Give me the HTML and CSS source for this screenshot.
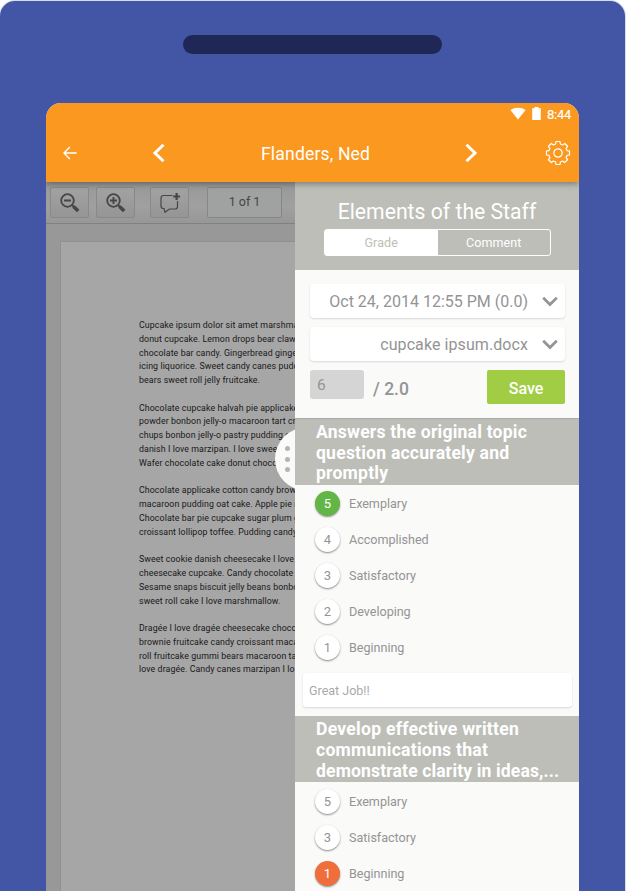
FILE: index.html
```html
<!DOCTYPE html>
<html lang="en">
<head>
<meta charset="utf-8">
<title>Grader</title>
<link rel="stylesheet" href="styles.css">
</head>
<body>
<div class="tablet">
  <div class="speaker"></div>
  <div class="screen">
    <header class="appbar">
      <div class="status">
        <svg class="wifi" width="16" height="13" viewBox="0 0 16 13"><path d="M.4 3Q3.500.8 8 .8T15.600 3L8 12.400z" fill="#fff"/></svg>
        <svg class="battery" width="9" height="13" viewBox="0 0 9 13"><path d="M.2 1.300H2.500V0H6.500V1.300H8.800V13H.2z" fill="#fff"/></svg>
        <span class="clock">8:44</span>
      </div>
      <nav class="nav">
        <svg class="back" width="16" height="14" viewBox="0 0 16 14"><path d="M7.800 1 2 7l5.800 6M2 7h12.600" fill="none" stroke="#fff" stroke-width="1.400"/></svg>
        <svg class="prev" width="14" height="20" viewBox="0 0 14 20"><path d="M11.500 1.700 3 10l8.500 8.300" fill="none" stroke="#fff" stroke-width="3"/></svg>
        <h1 class="student">Flanders, Ned</h1>
        <svg class="next" width="14" height="20" viewBox="0 0 14 20"><path d="M2.500 1.700 11 10l-8.500 8.300" fill="none" stroke="#fff" stroke-width="3"/></svg>
        <svg class="gear" width="26" height="26" viewBox="-13 -13 26 26" fill="none" stroke="#fff" stroke-width="1.200" stroke-linejoin="round"><circle r="4.200"/><path d="M-2-11.500H2L2.400-9 4.660-8.060 6.720-9.540 9.540-6.720 8.060-4.660 9-2.400 11.500-2V2L9 2.400 8.060 4.660 9.540 6.720 6.720 9.540 4.660 8.060 2.400 9 2 11.500H-2L-2.400 9-4.660 8.060-6.720 9.540-9.540 6.720-8.060 4.660-9 2.400-11.500 2V-2L-9-2.400-8.060-4.660-9.540-6.720-6.720-9.540-4.660-8.060-2.400-9z"/></svg>
      </nav>
    </header>
    <div class="content">
      <section class="viewer">
        <div class="toolbar">
          <div class="tool zoom-out"><svg width="22" height="22" viewBox="0 0 22 22" fill="none" stroke="#464646"><circle cx="8.500" cy="8.500" r="6.300" stroke-width="1.800"/><path d="M5 8.500h7" stroke-width="1.900"/><path d="M13 13l2 2" stroke-width="2"/><path d="m14.500 14.500 4.700 4.500" stroke-width="3.600"/></svg></div>
          <div class="tool zoom-in"><svg width="22" height="22" viewBox="0 0 22 22" fill="none" stroke="#464646"><circle cx="8.500" cy="8.500" r="6.300" stroke-width="1.800"/><path d="M5 8.500h7M8.500 5v7" stroke-width="1.900"/><path d="M13 13l2 2" stroke-width="2"/><path d="m14.500 14.500 4.700 4.500" stroke-width="3.600"/></svg></div>
          <div class="tool note"><svg width="22" height="22" viewBox="0 0 22 22" fill="none" stroke="#464646"><path d="M13.500 3.500H4.500Q2 3.500 2 6v8Q2 16.500 4.500 16.500H5l1 3.700 4.500-3.200h5.500q2.500 0 2.500-2.500V9" stroke-width="1.200"/><path d="M14.200 4.500H21M17.600 1v7" stroke-width="2.200"/></svg></div>
          <div class="pages">1 of 1</div>
        </div>
        <div class="desk">
          <article class="paper">
<p>Cupcake ipsum dolor sit amet marshma
donut cupcake. Lemon drops bear claw
chocolate bar candy. Gingerbread ginge
icing liquorice. Sweet candy canes pudd
bears sweet roll jelly fruitcake.</p>
<p>Chocolate cupcake halvah pie applicake
powder bonbon jelly-o macaroon tart cr
chups bonbon jelly-o pastry pudding g
danish I love marzipan. I love sweet
Wafer chocolate cake donut choco</p>
<p>Chocolate applicake cotton candy brow
macaroon pudding oat cake. Apple pie m
Chocolate bar pie cupcake sugar plum g
croissant lollipop toffee. Pudding candy</p>
<p>Sweet cookie danish cheesecake I love
cheesecake cupcake. Candy chocolate
Sesame snaps biscuit jelly beans bonbo
sweet roll cake I love marshmallow.</p>
<p>Dragée I love dragée cheesecake choco
brownie fruitcake candy croissant maca
roll fruitcake gummi bears macaroon ta
love dragée. Candy canes marzipan I lo</p>
          </article>
        </div>
      </section>
      <aside class="drawer">
        <div class="handle"><i></i><i></i><i></i></div>
        <div class="head">
          <h2>Elements of the Staff</h2>
          <div class="tabs"><span class="tab active">Grade</span><span class="tab">Comment</span></div>
        </div>
        <div class="form">
          <div class="select"><span class="date">Oct 24, 2014 12:55 PM (0.0)</span><svg width="16" height="11" viewBox="0 0 16 11"><path d="m1.200 1.800 6.800 6.700 6.800-6.700" fill="none" stroke="#949494" stroke-width="2.700"/></svg></div>
          <div class="select"><span class="file">cupcake ipsum.docx</span><svg width="16" height="11" viewBox="0 0 16 11"><path d="m1.200 1.800 6.800 6.700 6.800-6.700" fill="none" stroke="#949494" stroke-width="2.700"/></svg></div>
          <div class="score"><span class="points">6</span><span class="total">/ 2.0</span><span class="save">Save</span></div>
        </div>
        <h3>Answers the original topic<br>question accurately and<br>promptly</h3>
        <ul>
          <li><b class="green">5</b>Exemplary</li>
          <li><b>4</b>Accomplished</li>
          <li><b>3</b>Satisfactory</li>
          <li><b>2</b>Developing</li>
          <li><b>1</b>Beginning</li>
        </ul>
        <div class="remark">Great Job!!</div>
        <h3 class="second"><span>Develop effective written<br>communications that</span><br>demonstrate clarity in ideas,...</h3>
        <ul>
          <li><b>5</b>Exemplary</li>
          <li><b>3</b>Satisfactory</li>
          <li><b class="orange">1</b>Beginning</li>
        </ul>
      </aside>
    </div>
  </div>
</div>
</body>
</html>
```
FILE: styles.css
```css
* { box-sizing: border-box; }
body { margin: 0; height: 891px; overflow: hidden; background: #fff; font-family: Roboto, sans-serif; }
h1, h2, h3, p, ul { margin: 0; padding: 0; font-weight: 400; }
svg { display: block; flex: none; }
.tablet { height: 890px; margin: 1px 1px 0 0; padding-top: 34px; border-radius: 15px 15px 0 0; background: #4356a5; box-shadow: 0 0 0 1px #d5dded; }
.speaker { width: 259px; height: 19px; margin-left: 183px; border-radius: 10px; background: #1f2757; }
.screen { width: 533px; height: 788px; margin: 49px 0 0 46px; border-radius: 15px 15px 0 0; overflow: hidden; display: flex; flex-direction: column; background: #fafaf9; }
.appbar { position: relative; z-index: 2; flex: none; height: 79px; background: #fb9820; color: #fff; box-shadow: 0 2px 6px rgba(0,0,0,.35); }
.status { display: flex; justify-content: flex-end; align-items: center; height: 22px; padding-right: 7px; }
.battery { margin: 0 6px 2px 6px; }
.wifi { margin-bottom: 2px; }
.clock { font-size: 13px; width: 25px; letter-spacing: -.25px; -webkit-text-stroke: .2px #fff; }
.nav { display: flex; align-items: center; height: 57px; padding: 0 8px 1px 16px; }
.prev { margin-left: 74px; }
.student { width: 110px; margin: 2px 0 0 95px; font-size: 17.600px; letter-spacing: .15px; white-space: nowrap; }
.next { margin-left: 93px; }
.gear { margin-left: auto; }
.content { display: flex; flex: 1; min-height: 0; }
.viewer { width: 249px; overflow: hidden; background: #989898; display: flex; flex-direction: column; }
.toolbar { flex: none; height: 42px; padding: 5px 0 0 4px; display: flex; background: linear-gradient(#989898, #a0a0a0 60%, #979797); border-bottom: 1px solid #818181; }
.tool { width: 39px; height: 31px; margin-right: 7px; border: 1px solid #898989; border-radius: 2px; display: flex; align-items: center; justify-content: center; background: linear-gradient(#a2a2a2, #959595); }
.note { margin: 0 18px 0 8px; }
.pages { width: 75px; height: 31px; border: 1px solid #878787; border-radius: 2px; background: #a0a2a2; color: #454545; font-size: 12.500px; line-height: 27px; text-align: center; }
.desk { flex: 1; padding: 17px 0 0 14px; }
.paper { display: flex; flex-direction: column; gap: 13.780px; width: 500px; height: 700px; padding: 77px 0 0 78px; border: 1px solid #919191; background: #a6a6a6; white-space: pre; font-size: 8.800px; line-height: 13.780px; color: #181818; letter-spacing: .09px; }
.drawer { position: relative; width: 284px; background: #fafaf9; color: #949494; }
.handle { position: absolute; left: -20px; top: 247px; width: 20px; height: 60px; clip-path: circle(31.700px at 31.700px 50%); background: #fafaf9; display: flex; flex-direction: column; align-items: center; gap: 5.500px; padding: 17px 0 0 4px; }
.handle i { width: 5px; height: 5px; border-radius: 50%; background: #b5b5b2; }
.head { height: 88px; padding-top: 17px; background: #bdbeb7; color: #fff; text-align: center; }
.head h2 { font-size: 21.200px; line-height: 26px; white-space: nowrap; }
.tabs { display: flex; width: 227px; height: 27px; margin: 4px auto 0 29px; border: 1px solid #fff; border-radius: 3px; }
.tab { flex: 1; font-size: 12.500px; line-height: 26px; letter-spacing: .1px; }
.active { background: #fff; color: #bdbeb7; }
.form { height: 148px; padding: 14px 14px 0 15px; }
.select { height: 34px; margin-bottom: 9px; padding: 0 7px; display: flex; align-items: center; justify-content: flex-end; gap: 14px; border-radius: 4px; background: #fff; box-shadow: 0 1px 2px #d7d8da; font-size: 16px; white-space: nowrap; }
.file { letter-spacing: .08px; }
.score { display: flex; }
.points { width: 54px; height: 29px; padding-left: 7px; border-radius: 3px; background: #d5d5d5; font-size: 15.500px; line-height: 30px; }
.total { margin-left: 9px; font-size: 17.500px; font-weight: 500; line-height: 38px; }
.save { width: 78px; height: 34px; margin-left: auto; border-radius: 2px; background: #a0cd43; color: #fff; font-size: 16px; font-weight: 500; line-height: 37px; text-align: center; }
h3 { height: 67px; padding: 3px 0 0 21px; border-top: 1px solid #aaa; background: #bdbeb7; color: #fff; font-size: 17.600px; font-weight: 700; line-height: 20.700px; letter-spacing: .2px; white-space: nowrap; }
h3.second { height: 66px; padding-top: 3px; border-top: 0; letter-spacing: .12px; }
.second span { letter-spacing: .24px; }
ul { list-style: none; }
li { height: 36.100px; padding: 1px 0 0 20px; display: flex; align-items: center; gap: 9px; font-size: 12.600px; letter-spacing: -.03px; }
li b { width: 25px; height: 25px; border-radius: 50%; background: #fff; box-shadow: 0 1px 2px rgba(0,0,0,.45); text-align: center; font-size: 13px; font-weight: 400; line-height: 26px; }
b.green { background: #62b645; color: #fff; }
b.orange { background: #f06e3b; color: #fff; }
.remark { width: 269px; height: 34px; margin: 8px 0 9px 8px; padding-left: 6px; border-radius: 3px; background: #fff; box-shadow: 0 1px 2px #d7d8da; font-size: 12.500px; line-height: 35px; color: #aaa; }
```
